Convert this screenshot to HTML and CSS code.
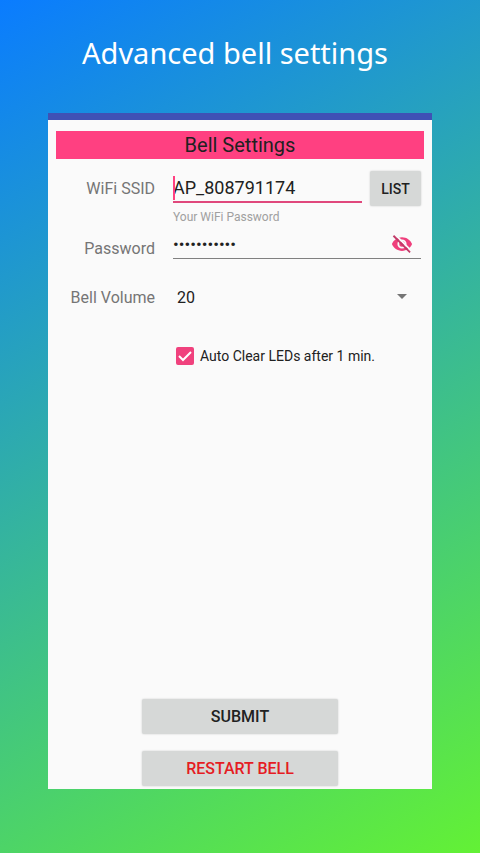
FILE: index.html
```html
<!DOCTYPE html>
<html lang="en">
<head>
  <meta charset="UTF-8" />
  <meta name="viewport" content="width=device-width, initial-scale=1.0"/>
  <title>Advanced bell settings</title>
  <link rel="stylesheet" href="styles.css">
</head>
<body>
  <h1>Advanced bell settings</h1>

  <form class="screen">
    <h2>Bell Settings</h2>

    <div class="row">
      <label for="ssid">WiFi SSID</label>
      <div class="ssid">
        <div class="field active">
          <input type="text" id="ssid" value="AP_808791174">
        </div>
        <button type="button" class="btn list">LIST</button>
      </div>
    </div>

    <div class="row password-row">
      <label for="password">Password</label>
      <div>
        <label class="hint" for="password">Your WiFi Password</label>
        <div class="field">
          <input type="password" id="password" value="bell1234567">
          <button type="button" class="toggle" aria-label="Show password">
            <svg viewBox="0 0 24 24" width="22" height="22">
              <path fill="#ef3f7c" d="M12 4.500C7 4.500 2.700 7.600 1 12c1.700 4.400 6 7.500 11 7.500s9.300-3.100 11-7.500c-1.700-4.400-6-7.500-11-7.500zM12 17a5 5 0 1 1 0-10 5 5 0 0 1 0 10zM12 9a3 3 0 1 0 0 6 3 3 0 0 0 0-6z"/>
              <path stroke="#fafafa" stroke-width="2" d="M4.500 1.700 22.300 19.500"/>
              <path stroke="#c23a68" stroke-width="2" d="M2.700 3 20.800 21.100"/>
            </svg>
          </button>
        </div>
      </div>
    </div>

    <div class="row volume-row">
      <label for="volume">Bell Volume</label>
      <div class="select">
        <select id="volume">
          <option>10</option>
          <option selected>20</option>
          <option>30</option>
        </select>
      </div>
    </div>

    <div class="row">
      <label class="check">
        <input type="checkbox" checked>
        <svg viewBox="0 0 18 18" width="18" height="18">
          <path fill="none" stroke="#fff" stroke-width="2" d="M3 9l4 4 8-8"/>
        </svg>
        Auto Clear LEDs after 1 min.
      </label>
    </div>

    <div class="actions">
      <button type="submit" class="btn">SUBMIT</button>
      <button type="button" class="btn restart">RESTART BELL</button>
    </div>
  </form>
</body>
</html>
```
FILE: styles.css
```css
:root {
  --bar: #3f51b5;
  --accent: #ff4081;
  --paper: #fafafa;
  --button: #d6d8d7;
  --label: #757575;
  --text: #212121;
}

* {
  box-sizing: border-box;
}

body {
  font-family: Roboto, sans-serif;
  color: var(--text);
  background: linear-gradient(150deg, #0a7cff, #63f135);
  margin: 0;
  min-height: 100vh;
  padding: 32px 10% 64px;
  display: flex;
  flex-direction: column;
}

h1 {
  font-family: "Noto Sans", sans-serif;
  font-size: 29px;
  font-weight: 400;
  line-height: 42px;
  color: #fff;
  text-align: center;
  white-space: nowrap;
  margin: 0 10px 39px 0;
}

.screen {
  flex: 1;
  display: flex;
  flex-direction: column;
  background: var(--paper);
  border-top: 7px solid var(--bar);
  padding: 11px 8px 3px;
}

h2 {
  background: var(--accent);
  font-size: 20px;
  font-weight: 400;
  line-height: 28px;
  text-align: center;
  margin: 0 0 12px;
}

.row {
  display: grid;
  grid-template-columns: 99px minmax(0, 1fr);
  column-gap: 18px;
  align-items: center;
  padding-right: 3px;
}

.row > label {
  font-size: 16px;
  color: var(--label);
  text-align: right;
}

.ssid {
  display: flex;
  gap: 8px;
}

.field {
  position: relative;
  flex: 1;
  min-width: 0;
  display: flex;
  align-items: center;
  border-bottom: 1px solid #808080;
}

.field input {
  flex: 1;
  min-width: 0;
  font: 17px Roboto, sans-serif;
  color: var(--text);
  background: none;
  border: none;
  outline: none;
  padding: 0;
}

.field.active {
  border-bottom: 2px solid #e0487c;
  margin-bottom: 3px;
  padding-top: 3px;
}

.field.active input {
  font-size: 18px;
}

.field.active::before {
  content: "";
  position: absolute;
  left: 0;
  top: 5px;
  width: 2px;
  height: 24px;
  background: var(--accent);
}

.btn {
  font: 500 16px Roboto, sans-serif;
  color: var(--text);
  background: var(--button);
  border: none;
  border-radius: 2px;
  height: 35px;
  padding: 0;
  box-shadow: 0 0 2px rgba(0, 0, 0, 0.2);
}

.list {
  width: 51px;
  font-size: 14px;
}

.password-row {
  padding-top: 4px;
}

.password-row > label {
  padding-top: 28px;
}

.hint {
  display: block;
  font-size: 12px;
  line-height: 14px;
  color: #a0a0a0;
}

.password-row .field {
  height: 35px;
  padding: 5px 8px 0 0;
}

.toggle {
  display: flex;
  background: none;
  border: none;
  padding: 0;
}

.volume-row {
  padding-top: 22px;
  margin-bottom: 34px;
}

.select {
  position: relative;
}

.select::after {
  content: "";
  position: absolute;
  right: 14px;
  top: 13px;
  border: 5px solid transparent;
  border-top-color: #757575;
  border-bottom: none;
  pointer-events: none;
}

select {
  appearance: none;
  width: 100%;
  height: 32px;
  font: 16px Roboto, sans-serif;
  color: var(--text);
  background: none;
  border: none;
  padding: 0 4px;
}

.row > .check {
  grid-column: 2;
  display: flex;
  align-items: center;
  gap: 6px;
  font-size: 14px;
  line-height: 18px;
  color: var(--text);
  padding-left: 3px;
}

.check input {
  appearance: none;
  width: 18px;
  height: 18px;
  margin: 0 -24px 0 0;
  border: 2px solid var(--label);
  border-radius: 2px;
}

.check input:checked {
  background: #f0417d;
  border-color: #f0417d;
}

.check svg {
  position: relative;
  pointer-events: none;
}

.actions {
  display: flex;
  flex-direction: column;
  align-items: center;
  gap: 17px;
  margin-top: auto;
}

.actions .btn {
  width: 196px;
}

.actions .restart {
  color: #e51c23;
}
```
